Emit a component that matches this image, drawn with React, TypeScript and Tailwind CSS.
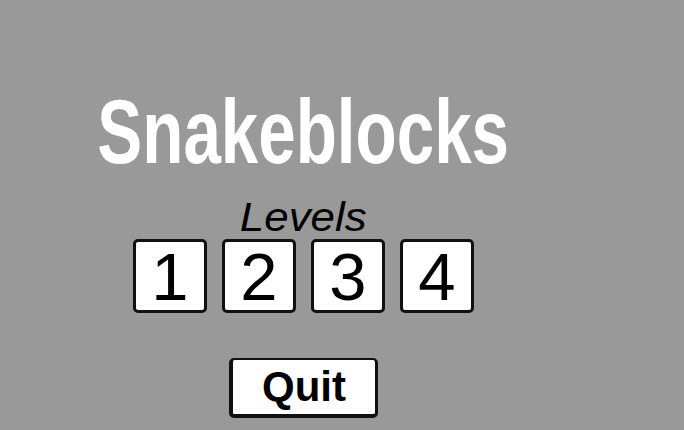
import React from "react";

const levels = [1, 2, 3, 4];

const App = () => {
  const pickLevel = (n: number) => {
    console.log("level", n);
  };

  return (
    <div
      className="w-[684px] h-[430px] bg-[#999999] overflow-hidden"
      style={{ fontFamily: '"Liberation Sans", Arial, sans-serif' }}
    >
      <div className="w-[607px] flex flex-col items-center pt-[86px]">
        <h1 className="text-[91px] leading-none font-bold text-white whitespace-nowrap scale-x-[0.74]">
          Snakeblocks
        </h1>

        <div className="mt-[20px] text-[41px] leading-none italic text-black scale-x-[1.07]">
          Levels
        </div>

        <div className="mt-[1px] flex gap-[15px]">
          {levels.map((n) => (
            <button
              key={n}
              onClick={() => pickLevel(n)}
              className="w-[74px] h-[74px] bg-white border-[3px] border-[#111] rounded-[5px] flex items-center justify-center text-[67px] leading-none text-black"
            >
              {n}
            </button>
          ))}
        </div>

        <button className="mt-[45px] w-[149px] h-[60px] bg-white border-[3px] border-t-2 border-l-4 border-b-4 border-[#111] rounded-[5px] flex items-center justify-center text-[42px] leading-none font-bold text-black">
          Quit
        </button>
      </div>
    </div>
  );
};

export default App;
